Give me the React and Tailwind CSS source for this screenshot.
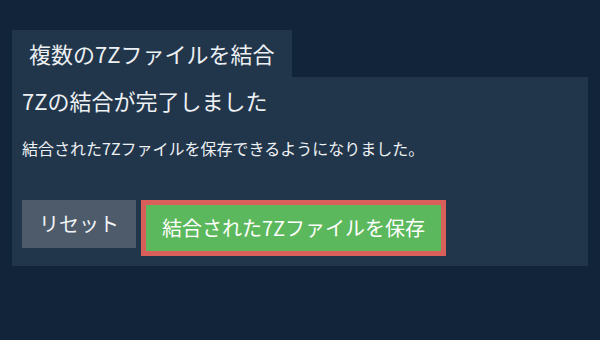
export default function App() {
  return (
    <div
      className="w-[600px] h-[340px] bg-[#11243a] pt-[30px] px-[12px] text-[#eef1f4]"
      style={{ fontFamily: '"Noto Sans CJK JP", "Noto Sans", sans-serif' }}
    >
      <div className="w-[280px] h-[47px] bg-[#22364b] pl-[17px] text-[22px] leading-[47px]">
        複数の7Zファイルを結合
      </div>
      <div className="h-[189px] bg-[#22364b] px-[10px] pt-[7px]">
        <h1 className="text-[22px] leading-[33px]">7Zの結合が完了しました</h1>
        <p className="mt-[19px] text-[16px] leading-[24px]">
          結合された7Zファイルを保存できるようになりました。
        </p>
        <div className="mt-[40px] flex items-start gap-[5px]">
          <button className="h-[48px] w-[114px] bg-[#4d5b6b] text-[20px] text-[#f2f4f6]">
            リセット
          </button>
          <button className="h-[56px] w-[305px] border-[5px] border-[#d9605a] bg-[#5cb85c] text-[20px] text-white">
            結合された7Zファイルを保存
          </button>
        </div>
      </div>
    </div>
  );
}
